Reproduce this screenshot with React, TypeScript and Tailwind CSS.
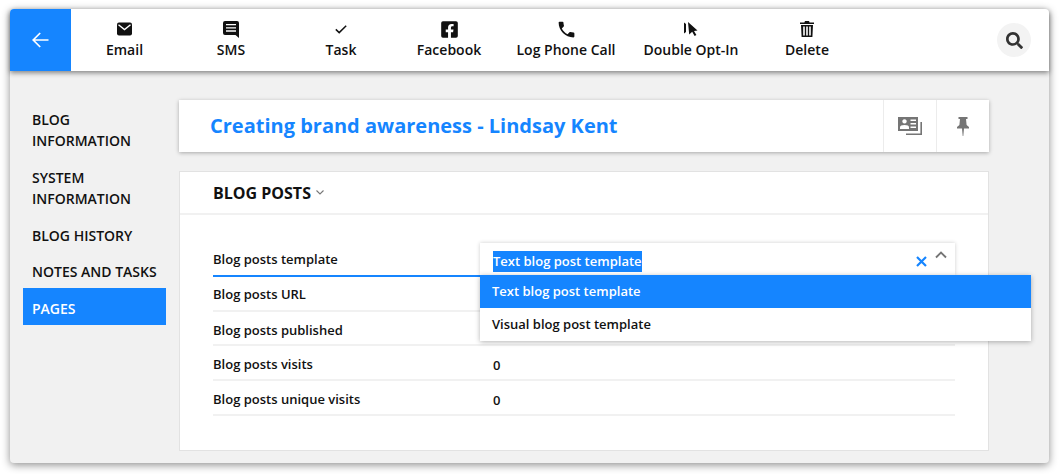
import { MdLocalPhone } from "react-icons/md";
import { FaFacebookSquare, FaSearch } from "react-icons/fa";
import type { ReactNode } from "react";

function EmailIcon() {
  return (
    <svg width="15" height="14" viewBox="0 0 15 14">
      <rect x="0" y="0.5" width="15" height="13" rx="2" fill="#111" />
      <path d="M1.5 2.8 L7.5 7.6 L13.5 2.8" fill="none" stroke="#fff" strokeWidth="1.4" />
    </svg>
  );
}

function SmsIcon() {
  return (
    <svg width="16" height="17" viewBox="0 0 16 17">
      <path d="M2 0 H14 Q16 0 16 2 V17 L12.5 14 H2 Q0 14 0 12 V2 Q0 0 2 0 Z" fill="#111" />
      <path d="M3 3.6 H13 M3 6.8 H13 M3 10 H13" stroke="#fff" strokeWidth="1.3" />
    </svg>
  );
}

function CheckIcon() {
  return (
    <svg width="12" height="9" viewBox="0 0 12 9">
      <path d="M0.8 4.4 L4.2 7.6 L11.2 0.8" fill="none" stroke="#111" strokeWidth="1.5" />
    </svg>
  );
}

function DoubleOptIn() {
  return (
    <svg width="14" height="14" viewBox="0 0 14 14" fill="#111">
      <path d="M0 0.5 L2 2 L2 10 L0 11.5 Z" />
      <path d="M4 0 L13.5 8.6 L10 8.9 L12.4 13 L10.6 14 L8.2 9.8 L5.2 12.6 Z" />
    </svg>
  );
}

function TrashIcon() {
  return (
    <svg width="14" height="16" viewBox="0 0 14 16" fill="#111">
      <path d="M5 0 H9 L9.6 1.6 H14 V3 H0 V1.6 H4.4 Z" />
      <path d="M1 4 H13 L12.4 16 H1.6 Z M3.2 5.6 V14.4 H4.8 V5.6 Z M6.2 5.6 V14.4 H7.8 V5.6 Z M9.2 5.6 V14.4 H10.8 V5.6 Z" fillRule="evenodd" />
    </svg>
  );
}

function BackIcon() {
  return (
    <svg width="17" height="16" viewBox="0 0 17 16">
      <path d="M8.2 1 L1.2 8 L8.2 15 M1.2 8 H16.5" fill="none" stroke="#fff" strokeWidth="1.7" />
    </svg>
  );
}

function CardIcon() {
  return (
    <svg width="24" height="18" viewBox="0 0 24 18" fill="#757575">
      <path d="M0 0 H20 V14 H0 Z M6.5 2.2 a2.2 2.2 0 1 0 .01 0 Z M2 12 H11 V10.4 Q11 8 6.5 8 Q2 8 2 10.4 Z M12.5 2.5 V4 H18 V2.5 Z M12.5 6 V7.5 H18 V6 Z M12.5 9.5 V11 H18 V9.5 Z" fillRule="evenodd" />
      <path d="M8 16.4 H22.4 V5 H24 V18 H8 Z" />
    </svg>
  );
}

function PinIcon() {
  return (
    <svg width="12" height="19" viewBox="0 0 12 19" fill="#757575">
      <path d="M1.5 0 H10.5 V2 H9 L9.6 8 L12 10 V11.4 H7 L6.3 19 H5.7 L5 11.4 H0 V10 L2.4 8 L3 2 H1.5 Z" />
    </svg>
  );
}

const actions: { label: string; width: string; icon: ReactNode }[] = [
  { label: "Email", width: "w-[107px]", icon: <EmailIcon /> },
  { label: "SMS", width: "w-[106px]", icon: <SmsIcon /> },
  { label: "Task", width: "w-[114px]", icon: <CheckIcon /> },
  { label: "Facebook", width: "w-[102px]", icon: <FaFacebookSquare size={19} /> },
  { label: "Log Phone Call", width: "w-[132px]", icon: <MdLocalPhone size={21} /> },
  { label: "Double Opt-In", width: "w-[118px]", icon: <DoubleOptIn /> },
  { label: "Delete", width: "w-[114px]", icon: <TrashIcon /> },
];

const rows = [
  { label: "Blog posts URL", value: "", cls: "h-[35px] pt-[2px]" },
  { label: "Blog posts published", value: "", cls: "h-[34px] pt-[5px]" },
  { label: "Blog posts visits", value: "0", cls: "h-[35px] pt-[4px]" },
  { label: "Blog posts unique visits", value: "0", cls: "h-[35px] pt-[4px]" },
];

export default function App() {
  return (
    <div className="w-[1059px] h-[474px] bg-white pl-[10px] pt-[9px] overflow-hidden font-['Open_Sans','Noto_Sans',sans-serif] text-[#111]">
      <div className="relative w-[1039px] h-[454px] bg-[#f1f1f1] rounded-[4px] shadow-[0_2px_9px_rgba(0,0,0,0.45)] flex flex-col">
        <header className="h-[62px] bg-white rounded-t-[4px] flex items-center shadow-[0_2px_5px_rgba(0,0,0,0.45)] z-10">
          <div className="w-[61px] h-full bg-[#1585ff] rounded-tl-[4px] flex items-center justify-center">
            <BackIcon />
          </div>
          {actions.map((a) => (
            <div key={a.label} className={`${a.width} flex flex-col items-center mt-[-2px]`}>
              <div className="h-[22px] flex items-center justify-center">{a.icon}</div>
              <div className="text-[14px] leading-[20px] font-semibold whitespace-nowrap">{a.label}</div>
            </div>
          ))}
          <div className="ml-auto mr-[18px] w-[34px] h-[34px] rounded-full bg-[#f3f3f3] flex items-center justify-center text-[#333]">
            <FaSearch size={17} />
          </div>
        </header>

        <div className="flex pl-[13px]">
          <nav className="w-[143px] mt-[30px] text-[14px] leading-[21px] font-semibold">
            <div className="h-[58px] pl-[9px] flex items-center">BLOG<br />INFORMATION</div>
            <div className="h-[58px] pl-[9px] flex items-center">SYSTEM<br />INFORMATION</div>
            <div className="h-[37px] pl-[9px] flex items-center">BLOG HISTORY</div>
            <div className="h-[34px] pl-[9px] pt-[1px] flex items-center">NOTES AND TASKS</div>
            <div className="h-[37px] pl-[9px] pt-[3px] flex items-center bg-[#1585ff] text-white">PAGES</div>
          </nav>

          <main className="w-[810px] ml-[13px] pt-[29px]">
            <div className="h-[52px] bg-white shadow-[0_1px_4px_rgba(0,0,0,0.3)] flex items-center">
              <h1 className="flex-1 pl-[31px] text-[20px] font-bold text-[#1585ff]">Creating brand awareness - Lindsay Kent</h1>
              <div className="w-[53px] h-full border-l border-[#ececec] flex items-center justify-center">
                <CardIcon />
              </div>
              <div className="w-[53px] h-full border-l border-[#ececec] flex items-center justify-center">
                <PinIcon />
              </div>
            </div>

            <section className="mt-[19px] h-[280px] bg-white border border-[#e2e2e2]">
              <div className="h-[43px] border-b-2 border-[#f1f1f1] pl-[33px] flex items-center">
                <span className="text-[16px] font-bold">BLOG POSTS</span>
                <svg width="8" height="5" viewBox="0 0 8 5" className="ml-[5px]">
                  <path d="M0.5 0.5 L4 4 L7.5 0.5" fill="none" stroke="#777" strokeWidth="1.1" />
                </svg>
              </div>

              <div className="mx-[33px] mt-[28px] text-[13px] font-semibold">
                <div className="h-[34px] border-b-2 border-[#1585ff] flex">
                  <div className="w-[267px] pt-[6px] leading-[20px]">Blog posts template</div>
                  <div className="flex-1 h-[32px] bg-white shadow-[0_0_4px_rgba(0,0,0,0.2)] flex items-center pl-[13px] relative">
                    <span className="bg-[#1585ff] text-white leading-[21px] mt-[4px]">Text blog post template</span>
                    <svg width="11" height="11" viewBox="0 0 11 11" className="absolute right-[28px] top-[13px]">
                      <path d="M1 1 L10 10 M10 1 L1 10" stroke="#1585ff" strokeWidth="2.2" />
                    </svg>
                    <svg width="12" height="8" viewBox="0 0 12 8" className="absolute right-[8px] top-[8px]">
                      <path d="M1 6.5 L6 1.5 L11 6.5" fill="none" stroke="#757575" strokeWidth="1.9" />
                    </svg>
                  </div>
                </div>
                {rows.map((r) => (
                  <div key={r.label} className={`${r.cls} border-b-2 border-[#f1f1f1] flex items-center`}>
                    <div className="w-[280px]">{r.label}</div>
                    <div className="mt-[2px]">{r.value}</div>
                  </div>
                ))}
              </div>
            </section>
          </main>
        </div>

        <div className="absolute left-[470px] top-[266px] w-[551px] bg-white shadow-[0_1px_5px_rgba(0,0,0,0.3)] z-20 text-[13px] font-semibold">
          <div className="h-[33px] pl-[12px] flex items-center bg-[#1585ff] text-white">Text blog post template</div>
          <div className="h-[33px] pl-[12px] flex items-center">Visual blog post template</div>
        </div>
      </div>
    </div>
  );
}
